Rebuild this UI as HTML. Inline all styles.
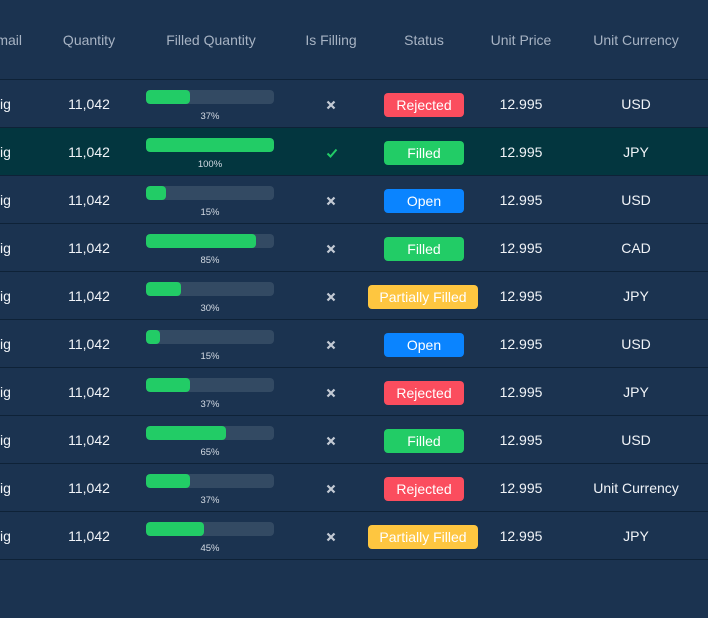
<!DOCTYPE html><html><head><style>
body{margin:0;width:708px;height:618px;background:#1b3350;font-family:"Liberation Sans",sans-serif;overflow:hidden;position:relative}
.h{position:absolute;top:32px;color:#a7b3c3;font-size:14px;transform:translateX(-50%);white-space:nowrap}
.r{position:absolute;left:0;width:708px;height:47px;border-bottom:1px solid #0e2237}
.t{position:absolute;top:16px;color:#f1f4f8;font-size:14px;transform:translateX(-50%);white-space:nowrap}
.bar{position:absolute;left:146px;top:10px;width:128px;height:14px;border-radius:4px;background:#334a63;overflow:hidden}
.bar i{display:block;height:14px;background:#22cc66;border-radius:4px}
.p{position:absolute;top:31px;left:210px;transform:translateX(-50%);font-size:9.5px;color:#d4dbe4}
.b{position:absolute;top:13px;height:24px;line-height:24px;border-radius:4px;color:#fff;font-size:14px;text-align:center}
.x{position:absolute;left:326px;top:20px}
</style></head><body>
<div class="h" style="transform:none;left:-13px">Email</div>
<div class="h" style="left:89px">Quantity</div>
<div class="h" style="left:211px">Filled Quantity</div>
<div class="h" style="left:331px">Is Filling</div>
<div class="h" style="left:424px">Status</div>
<div class="h" style="left:521px">Unit Price</div>
<div class="h" style="left:636px">Unit Currency</div>
<div style="position:absolute;top:79px;left:0;width:708px;height:1px;background:#0e2237"></div>
<div id="rows"></div>
<script>
var d=[[44,"37%",0,"Rejected","USD"],[128,"100%",1,"Filled","JPY"],[20,"15%",0,"Open","USD"],[110,"85%",0,"Filled","CAD"],[35,"30%",0,"Partially Filled","JPY"],[14,"15%",0,"Open","USD"],[44,"37%",0,"Rejected","JPY"],[80,"65%",0,"Filled","USD"],[44,"37%",0,"Rejected","Unit Currency"],[58,"45%",0,"Partially Filled","JPY"]];
var c={"Rejected":["#fb4d5e",384,80],"Filled":["#22cc66",384,80],"Open":["#0a84ff",384,80],"Partially Filled":["#fec640",368,110]};
var h="";d.forEach(function(r,i){var s=c[r[3]];
h+='<div class="r" style="top:'+(80+48*i)+'px;'+(r[2]?'background:#03363f':'')+'">'+
'<div class="t" style="left:0;transform:none">ig</div><div class="t" style="left:89px">11,042</div>'+
'<div class="bar"><i style="width:'+r[0]+'px"></i></div><div class="p">'+r[1]+'</div>'+
(r[2]?'<svg class="x" style="top:19px" width="12" height="12" viewBox="0 0 12 12"><path d="M1.5 6.5l3 3 6-7" stroke="#22cc66" stroke-width="2" fill="none"/></svg>':'<svg class="x" width="10" height="10" viewBox="0 0 10 10"><path d="M1.5 1.5l7 7M8.5 1.5l-7 7" stroke="#c3cad4" stroke-width="2.2"/></svg>')+
'<div class="b" style="background:'+s[0]+';left:'+s[1]+'px;width:'+s[2]+'px">'+r[3]+'</div>'+
'<div class="t" style="left:521px">12.995</div><div class="t" style="left:636px">'+r[4]+'</div></div>';});
document.getElementById("rows").innerHTML=h;
</script>
</body></html>
